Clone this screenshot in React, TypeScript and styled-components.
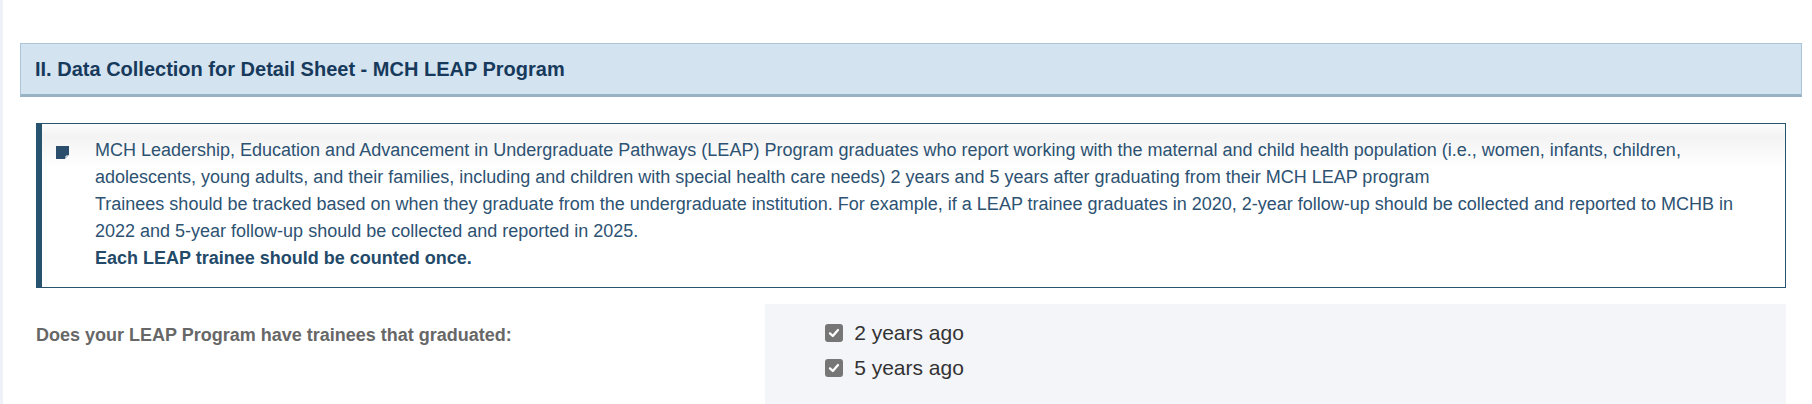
import styled, { createGlobalStyle } from 'styled-components'

const GlobalStyle = createGlobalStyle`
  html, body {
    margin: 0;
    padding: 0;
    background: #ffffff;
  }
  body {
    font-family: 'Liberation Sans', Arial, sans-serif;
    border-left: 3px solid #eef1f5;
    min-height: 404px;
    box-sizing: border-box;
  }
`

const Page = styled.div`
  padding: 43px 10px 0 17px;
`

const SectionHeader = styled.div`
  background: #d4e3f0;
  border: 1px solid #a9c5d7;
  border-bottom: 3px solid #97b3c3;
  padding: 13px 14px;
`

const SectionTitle = styled.h2`
  margin: 0;
  font-size: 20px;
  line-height: 24px;
  font-weight: 700;
  color: #173a5c;
`

const SectionBody = styled.div`
  padding: 26px 16px 0;
`

const InfoBox = styled.div`
  display: flex;
  align-items: flex-start;
  border: 1px solid #27536f;
  border-left-width: 6px;
  background: linear-gradient(to bottom, #fcfcfc 0px, #f3f3f4 12px, #ffffff 44px);
  padding: 13px 20px 15px 14px;
`

const NoteIcon = styled.svg`
  flex: none;
  width: 13px;
  height: 13px;
  margin-top: 9px;
  margin-right: 26px;
`

const InfoText = styled.div`
  font-size: 18px;
  line-height: 27px;
  color: #2d5272;
`

const Strong = styled.strong`
  font-weight: 700;
  color: #234a69;
`

const QuestionRow = styled.div`
  display: grid;
  grid-template-columns: 5fr 7fr;
  margin-top: 16px;
`

const QuestionLabel = styled.div`
  padding-top: 20px;
  font-size: 18px;
  line-height: 22px;
  font-weight: 700;
  color: #676767;
`

const AnswerPanel = styled.div`
  background: #f4f5f9;
  padding: 16px 0 30px 60px;
  display: flex;
  flex-direction: column;
  gap: 10px;
`

const CheckOption = styled.label`
  display: flex;
  align-items: center;
  gap: 11px;
  font-size: 21px;
  line-height: 25px;
  color: #333333;
`

const CheckBox = styled.span`
  flex: none;
  width: 18px;
  height: 18px;
  border-radius: 3px;
  background: #767676;
  display: flex;
  align-items: center;
  justify-content: center;
`

const Check = () => (
  <CheckBox>
    <svg width="12" height="12" viewBox="0 0 12 12">
      <path d="M2 6.4 L4.8 9 L10 3" fill="none" stroke="#ffffff" strokeWidth="2.3" strokeLinecap="round" strokeLinejoin="round" />
    </svg>
  </CheckBox>
)

export default function App() {
  return (
    <>
      <GlobalStyle />
      <Page>
        <SectionHeader>
          <SectionTitle>II. Data Collection for Detail Sheet - MCH LEAP Program</SectionTitle>
        </SectionHeader>
        <SectionBody>
          <InfoBox>
            <NoteIcon viewBox="0 0 13 13">
              <path d="M0 0 H13 V9 L9 13 H0 Z" fill="#2b4e6c" />
              <path d="M10 13 V10 H13" fill="none" stroke="#ffffff" strokeWidth="1" />
            </NoteIcon>
            <InfoText>
              MCH Leadership, Education and Advancement in Undergraduate Pathways (LEAP) Program graduates who report working with the maternal and child health population (i.e., women, infants, children, adolescents, young adults, and their families, including and children with special health care needs) 2 years and 5 years after graduating from their MCH LEAP program
              <br />
              Trainees should be tracked based on when they graduate from the undergraduate institution. For example, if a LEAP trainee graduates in 2020, 2-year follow-up should be collected and reported to MCHB in 2022 and 5-year follow-up should be collected and reported in 2025.
              <br />
              <Strong>Each LEAP trainee should be counted once.</Strong>
            </InfoText>
          </InfoBox>
          <QuestionRow>
            <QuestionLabel>Does your LEAP Program have trainees that graduated:</QuestionLabel>
            <AnswerPanel>
              <CheckOption>
                <Check />
                2 years ago
              </CheckOption>
              <CheckOption>
                <Check />
                5 years ago
              </CheckOption>
            </AnswerPanel>
          </QuestionRow>
        </SectionBody>
      </Page>
    </>
  )
}
